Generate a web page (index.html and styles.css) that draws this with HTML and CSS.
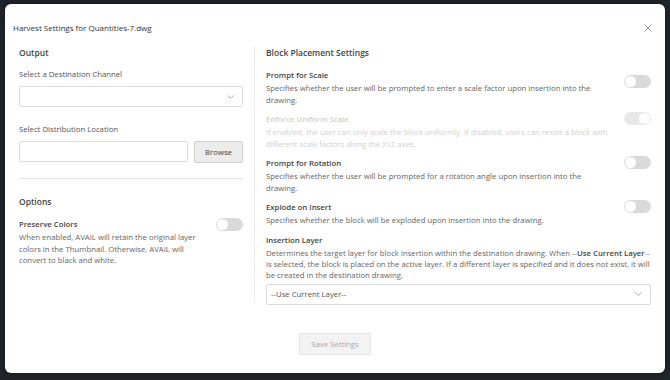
FILE: index.html
```html
<!DOCTYPE html>
<html lang="en">
<head>
    <meta charset="UTF-8">
    <meta name="viewport" content="width=device-width, initial-scale=1.0">
    <title>Harvest Settings</title>
    <link rel="stylesheet" href="styles.css">
</head>
<body>
    <div class="modal">
        <div class="modal-header">
            <h1 class="modal-title">Harvest Settings for Quantities-7.dwg</h1>
            <button class="close" aria-label="Close">
                <svg width="8" height="8" viewBox="0 0 8 8"><path d="M0.5 0.5L7.5 7.5M7.5 0.5L0.5 7.5" stroke="#8a8a8a" stroke-width="0.9"/></svg>
            </button>
        </div>

        <div class="modal-body">
            <!-- left column -->
            <div class="col-left">
                <h2 class="section-title">Output</h2>
                <label class="field-label">Select a Destination Channel</label>
                <div class="select">
                    <span></span>
                    <svg class="chevron" width="7" height="4" viewBox="0 0 7 4"><path d="M0.5 0.5L3.5 3.3L6.5 0.5" fill="none" stroke="#888" stroke-width="0.7"/></svg>
                </div>

                <label class="field-label second">Select Distribution Location</label>
                <div class="path-row">
                    <div class="input"></div>
                    <button class="btn-browse">Browse</button>
                </div>

                <hr class="divider">

                <h2 class="section-title">Options</h2>
                <div class="setting">
                    <div class="setting-text">
                        <div class="setting-title">Preserve Colors</div>
                        <p class="setting-desc">When enabled, AVAIL will retain the original layer colors in the Thumbnail. Otherwise, AVAIL will convert to black and white.</p>
                    </div>
                    <span class="toggle"></span>
                </div>
            </div>

            <div class="col-line"></div>

            <!-- right column -->
            <div class="col-right">
                <h2 class="section-title">Block Placement Settings</h2>

                <div class="setting">
                    <div class="setting-text">
                        <div class="setting-title">Prompt for Scale</div>
                        <p class="setting-desc">Specifies whether the user will be prompted to enter a scale factor upon insertion into the drawing.</p>
                    </div>
                    <span class="toggle low"></span>
                </div>

                <div class="setting disabled">
                    <div class="setting-text">
                        <div class="setting-title">Enforce Uniform Scale</div>
                        <p class="setting-desc">If enabled, the user can only scale the block uniformly. If disabled, users can resize a block with different scale factors along the XYZ axes.</p>
                    </div>
                    <span class="toggle on"></span>
                </div>

                <div class="setting">
                    <div class="setting-text">
                        <div class="setting-title">Prompt for Rotation</div>
                        <p class="setting-desc">Specifies whether the user will be prompted for a rotation angle upon insertion into the drawing.</p>
                    </div>
                    <span class="toggle"></span>
                </div>

                <div class="setting">
                    <div class="setting-text">
                        <div class="setting-title">Explode on Insert</div>
                        <p class="setting-desc">Specifies whether the block will be exploded upon insertion into the drawing.</p>
                    </div>
                    <span class="toggle"></span>
                </div>

                <div class="setting-title">Insertion Layer</div>
                <p class="setting-desc layer-desc">Determines the target layer for block insertion within the destination drawing. When --<b>Use Current Layer</b>-- is selected, the block is placed on the active layer. If a different layer is specified and it does not exist, it will be created in the destination drawing.</p>
                <div class="select layer">
                    <span>--Use Current Layer--</span>
                    <svg class="chevron" width="7" height="4" viewBox="0 0 7 4"><path d="M0.5 0.5L3.5 3.3L6.5 0.5" fill="none" stroke="#888" stroke-width="0.7"/></svg>
                </div>
            </div>
        </div>

        <div class="modal-footer">
            <button class="btn-save" disabled>Save Settings</button>
        </div>
    </div>
</body>
</html>
```

FILE: styles.css
```css
* {
    margin: 0;
    padding: 0;
    box-sizing: border-box;
}
body {
    background: #20252b;
    font-family: "Open Sans", "Noto Sans", sans-serif;
    color: #444;
    height: 380px;
    overflow: hidden;
}
button {
    font-family: inherit;
    border: 0;
    outline: 0;
    background: transparent;
}
.modal {
    margin: 4px 0 0 5px;
    width: 660px;
    height: 369px;
    background: #fff;
    border-radius: 6px;
    box-shadow: 0 0 6px rgba(0,0,0,0.4);
    display: flex;
    flex-direction: column;
}
.modal-header {
    display: flex;
    align-items: center;
    justify-content: space-between;
    padding: 12px 11px 0 8px;
    height: 36px;
}
.modal-title {
    font-size: 8px;
    font-weight: 400;
    color: #333;
    line-height: 12px;
}
.close {
    width: 12px;
    height: 12px;
    display: flex;
    align-items: center;
    justify-content: center;
}

.modal-body {
    display: flex;
    padding: 6px 14px 0;
    height: 263px;
}
.col-left {
    width: 224px;
}
.col-line {
    width: 1px;
    background: #ececec;
    margin: 0 11px 0;
}
.col-right {
    flex: 1;
}
.section-title {
    font-size: 8.5px;
    font-weight: 600;
    color: #444;
    line-height: 14px;
    margin-bottom: 8px;
}
.field-label {
    display: block;
    font-size: 7.75px;
    color: #555;
    line-height: 12px;
    margin-bottom: 6px;
}
.field-label.second {
    margin-top: 16px;
}
.select {
    height: 21px;
    border: 1px solid #dcdcdc;
    border-radius: 2px;
    display: flex;
    align-items: center;
    justify-content: space-between;
    padding: 0 8px 0 4px;
    font-size: 7.75px;
    color: #555;
}
.path-row {
    display: flex;
    gap: 6px;
}
.input {
    flex: 1;
    height: 21px;
    border: 1px solid #dcdcdc;
    border-radius: 2px;
}
.btn-browse {
    width: 49px;
    height: 22px;
    background: #ececec;
    border: 1px solid #cfcfcf;
    border-radius: 2px;
    font-size: 7.75px;
    color: #444;
}
.divider {
    border: 0;
    border-top: 1px solid #e4e4e4;
    margin: 15px 0 16px;
}

.setting {
    display: flex;
    align-items: flex-start;
    margin-bottom: 6px;
}
.setting-text {
    flex: 1;
}
.setting-title {
    font-size: 7.75px;
    font-weight: 600;
    color: #444;
    line-height: 15px;
}
.setting-desc {
    font-size: 7.75px;
    color: #666;
    line-height: 11.5px;
}
.setting-desc.layer-desc {
    line-height: 11px;
}
.setting-desc b {
    font-weight: 600;
    color: #444;
}
.setting.disabled .setting-title,
.setting.disabled .setting-desc {
    color: #d0d0d0;
}
.toggle {
    position: relative;
    width: 27px;
    height: 13px;
    border-radius: 7px;
    background: #dadada;
    margin-left: 12px;
}
.toggle::after {
    content: "";
    position: absolute;
    left: 1px;
    top: 1px;
    width: 11px;
    height: 11px;
    border-radius: 50%;
    background: #fff;
}
.toggle.low {
    margin-top: 7px;
}
.toggle.on {
    background: #e8e8e8;
}
.toggle.on::after {
    left: 15px;
}
.col-left .toggle {
    margin-top: 1px;
}
.select.layer {
    margin-top: 3px;
}

.modal-footer {
    display: flex;
    justify-content: center;
    padding-top: 30px;
}
.btn-save {
    width: 72px;
    height: 22px;
    background: #f3f3f3;
    border: 1px solid #e6e6e6;
    border-radius: 2px;
    font-size: 7.75px;
    color: #aaa;
}
```
